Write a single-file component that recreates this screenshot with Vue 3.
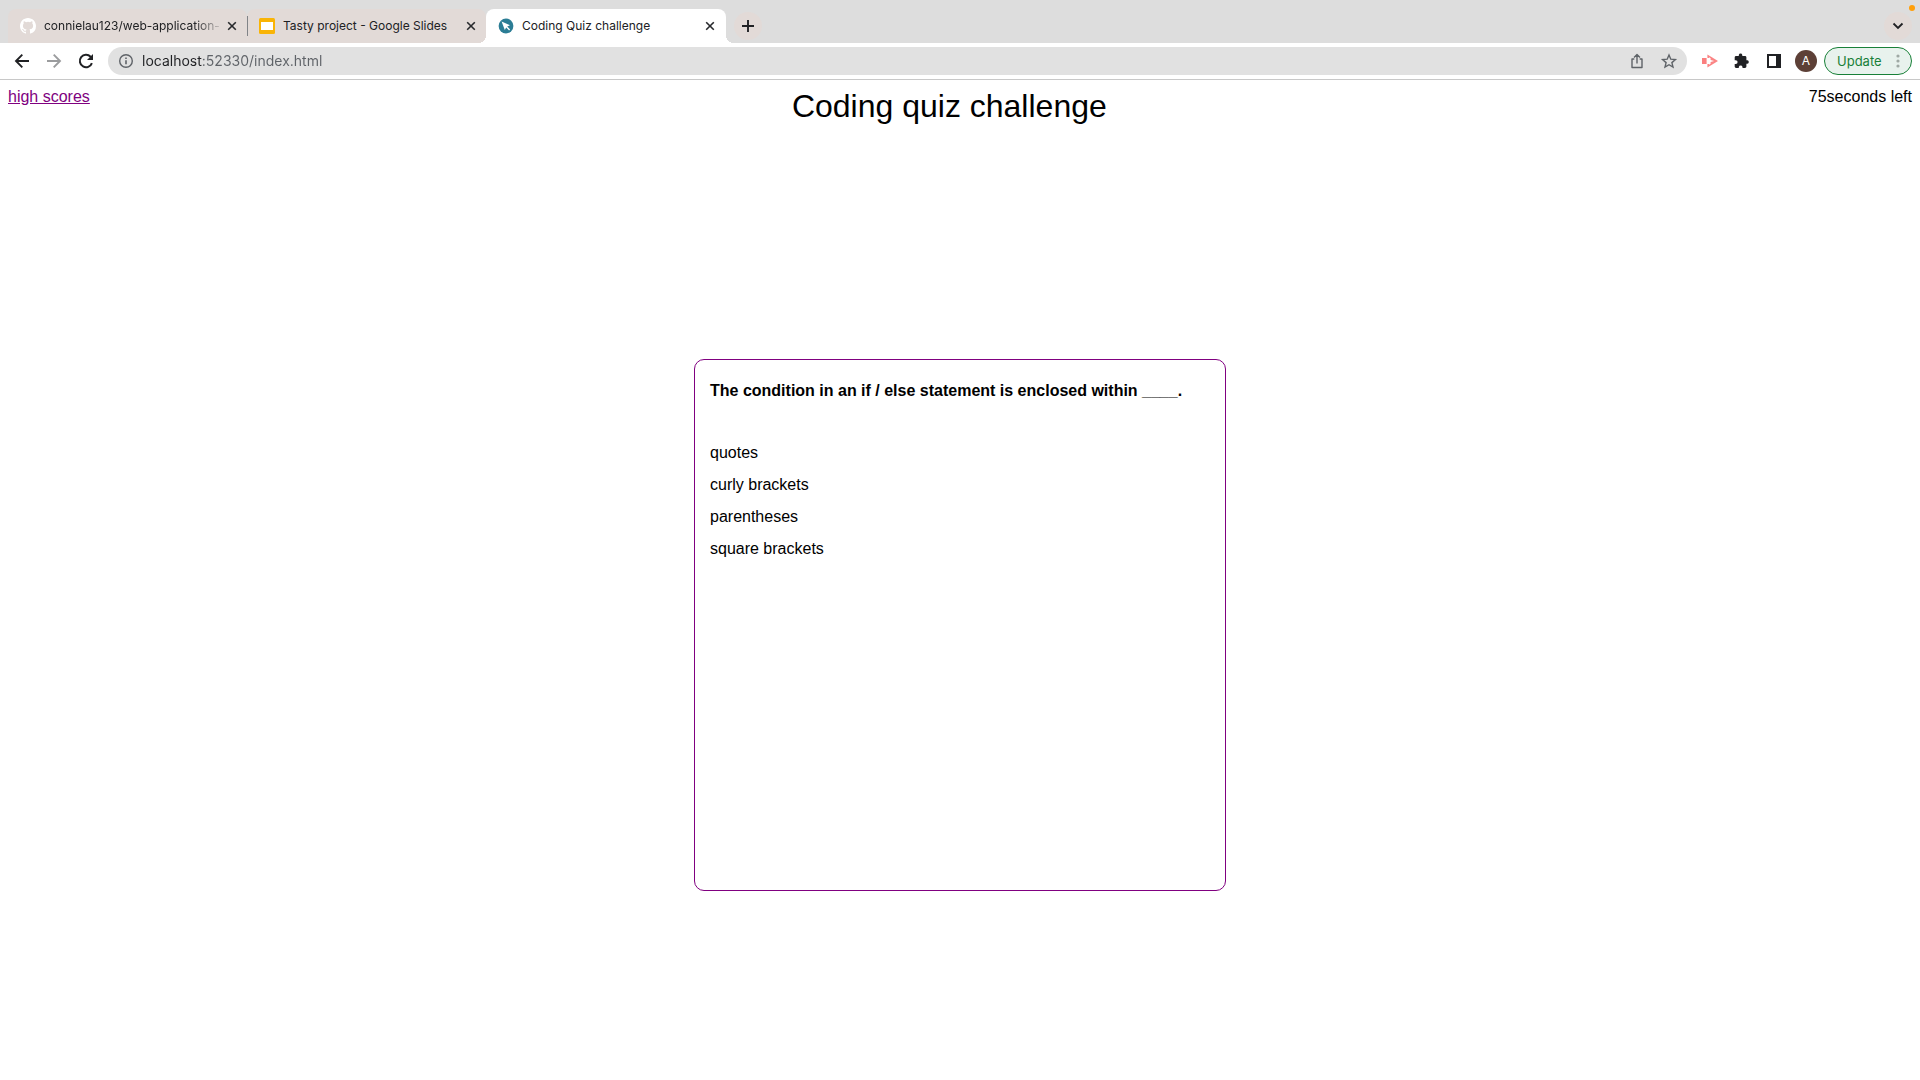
<script setup>
import { ref } from 'vue'

const tabs = [
  { id: 'github', title: 'connielau123/web-application-', fade: true },
  { id: 'slides', title: 'Tasty project - Google Slides' },
  { id: 'quiz', title: 'Coding Quiz challenge', active: true },
]
const address = ref('localhost:52330/index.html')
const secondsLeft = ref(75)
const question = 'The condition in an if / else statement is enclosed within ____.'
const choices = ['quotes', 'curly brackets', 'parentheses', 'square brackets']
</script>

<template>
  <div class="browser">
    <header class="chrome">
      <nav class="tab-strip" aria-label="Tabs">
        <div v-for="tab in tabs" :key="tab.id" class="tab" :class="[tab.id, { active: tab.active }]">
          <svg v-if="tab.id === 'github'" class="favicon" viewBox="0 0 16 16" aria-hidden="true">
            <path fill="#fff" d="M8 0C3.58 0 0 3.58 0 8c0 3.54 2.29 6.53 5.47 7.59.4.07.55-.17.55-.38 0-.19-.01-.82-.01-1.49-2.01.37-2.53-.49-2.69-.94-.09-.23-.48-.94-.82-1.13-.28-.15-.68-.52-.01-.53.63-.01 1.08.58 1.23.82.72 1.21 1.87.87 2.33.66.07-.52.28-.87.51-1.07-1.78-.2-3.64-.89-3.64-3.95 0-.87.31-1.59.82-2.15-.08-.2-.36-1.02.08-2.12 0 0 .67-.21 2.2.82a7.6 7.6 0 0 1 4 0c1.53-1.04 2.2-.82 2.2-.82.44 1.1.16 1.92.08 2.12.51.56.82 1.27.82 2.15 0 3.07-1.87 3.75-3.65 3.95.29.25.54.73.54 1.48 0 1.07-.01 1.93-.01 2.2 0 .21.15.46.55.38A8.01 8.01 0 0 0 16 8c0-4.42-3.58-8-8-8z" />
          </svg>
          <svg v-else-if="tab.id === 'slides'" class="favicon" viewBox="0 0 16 16" aria-hidden="true">
            <rect width="16" height="16" rx="1.5" fill="#f9b406" />
            <rect x="2" y="4" width="12" height="8" fill="#fff" />
          </svg>
          <svg v-else class="favicon" viewBox="0 0 16 16" aria-hidden="true">
            <circle cx="8" cy="8" r="7.4" fill="#2b7d95" />
            <path fill="#fff" d="M3.6 3.6 12 7.2 9.2 8.4l2.9 3-1 1-2.9-2.9L6.8 12z" />
          </svg>
          <a class="tab-title" :class="{ fade: tab.fade }" href="#">{{ tab.title }}</a>
          <button class="tab-close" type="button" aria-label="Close tab">
            <svg viewBox="0 0 16 16"><path d="m4.2 4.2 7.6 7.6m0-7.6-7.6 7.6" fill="none" stroke="#27292c" stroke-width="1.6" /></svg>
          </button>
        </div>
        <button class="round-button" type="button" aria-label="New tab">
          <svg viewBox="0 0 16 16"><path d="M8 2v12M2 8h12" fill="none" stroke="#202124" stroke-width="1.9" /></svg>
        </button>
        <button class="round-button tab-search" type="button" aria-label="Search tabs">
          <svg viewBox="0 0 16 16"><path d="m3.5 5.5 4.5 4.5 4.5-4.5" fill="none" stroke="#202124" stroke-width="1.8" /></svg>
        </button>
        <span class="recording-dot"></span>
      </nav>

      <div class="toolbar">
        <button class="tool" type="button" aria-label="Back">
          <svg viewBox="0 0 20 20"><path d="M17 10H4m6.3-6.3L4 10l6.3 6.3" fill="none" stroke="#202124" stroke-width="1.9" /></svg>
        </button>
        <button class="tool" type="button" aria-label="Forward">
          <svg viewBox="0 0 20 20"><path d="M3 10h13M9.7 3.7 16 10l-6.3 6.3" fill="none" stroke="#9b9c9e" stroke-width="1.9" /></svg>
        </button>
        <button class="tool" type="button" aria-label="Reload">
          <svg viewBox="0 0 20 20">
            <path d="M15.9 12.1A6.2 6.2 0 1 1 14.6 5.8L16 7.2" fill="none" stroke="#202124" stroke-width="2" />
            <path d="M17 3v6h-6z" fill="#202124" />
          </svg>
        </button>
        <form class="omnibox" @submit.prevent>
          <svg class="info" viewBox="0 0 16 16" aria-hidden="true">
            <circle cx="8" cy="8" r="6.3" fill="none" stroke="#5f6368" stroke-width="1.4" />
            <path d="M8 7.2v4M8 4.4v1.6" stroke="#5f6368" stroke-width="1.6" />
          </svg>
          <input v-model="address" class="address" type="text" aria-label="Address" spellcheck="false" />
          <button class="tool" type="button" aria-label="Share">
            <svg viewBox="0 0 20 20"><path d="M7.3 8H5v8.5h10V8h-2.3M10 12.5V3.8M7 6.6l3-3 3 3" fill="none" stroke="#5f6368" stroke-width="1.4" stroke-linejoin="round" /></svg>
          </button>
          <button class="tool" type="button" aria-label="Bookmark">
            <svg viewBox="0 0 20 20"><path d="m10 4 1.8 4.2 4.6.4-3.5 3 1.1 4.5-4-2.4-4 2.4 1.1-4.5-3.5-3 4.6-.4z" fill="none" stroke="#5f6368" stroke-width="1.4" /></svg>
          </button>
        </form>
        <div class="extensions">
          <button type="button" aria-label="Screen recorder">
            <svg viewBox="0 0 20 20">
              <path d="M2 7h4.6v6H2z" fill="#fb7f7f" />
              <path fill="#fb8585" fill-rule="evenodd" d="M7.4 3.4 18 10 7.4 16.6V13H9v.7l1.6-1V11l3.6-1-3.6-1V7.3L9 6.3V7H7.4z" />
            </svg>
          </button>
          <button type="button" aria-label="Extensions">
            <svg viewBox="0 0 20 20"><path fill="#202124" d="M15.4 9.3h-1V6.5c0-.8-.6-1.4-1.4-1.4h-2.7V4a1.8 1.8 0 0 0-3.5 0v1.1H4.1c-.8 0-1.4.6-1.4 1.4v2.7h1a1.9 1.9 0 0 1 0 3.8h-1v2.6c0 .8.6 1.4 1.4 1.4h2.7v-1a1.9 1.9 0 0 1 3.7 0v1H13c.8 0 1.4-.6 1.4-1.4v-2.8h1a1.8 1.8 0 0 0 0-3.5z" /></svg>
          </button>
          <button type="button" aria-label="Side panel">
            <svg viewBox="0 0 20 20"><path fill="#202124" fill-rule="evenodd" d="M3 3h14v14H3zM5 5v10h7V5z" /></svg>
          </button>
          <button class="avatar" type="button">A</button>
        </div>
        <button class="update" type="button">
          Update
          <svg viewBox="0 0 4 16" aria-hidden="true"><g fill="#9fa9a4"><circle cx="2" cy="3" r="1.6" /><circle cx="2" cy="8" r="1.6" /><circle cx="2" cy="13" r="1.6" /></g></svg>
        </button>
      </div>
    </header>

    <div class="page">
      <div class="page-header">
        <a class="scores" href="#">high scores</a>
        <h1>Coding quiz challenge</h1>
        <span class="timer">{{ secondsLeft }}seconds left</span>
      </div>
      <main class="quiz-card">
        <h2>{{ question }}</h2>
        <ul>
          <li v-for="choice in choices" :key="choice">
            <button type="button">{{ choice }}</button>
          </li>
        </ul>
      </main>
    </div>
  </div>
</template>

<style>
body {
  margin: 0;
  background: #fff;
}
</style>

<style scoped>
* {
  box-sizing: border-box;
}

button {
  padding: 0;
  border: 0;
  background: none;
  color: inherit;
  font: inherit;
}

svg {
  display: block;
}

.chrome {
  font-family: Inter, "Open Sans", sans-serif;
}

.tab-strip {
  position: relative;
  display: flex;
  align-items: flex-end;
  height: 43px;
  padding: 0 8px;
  background: #ddd;
}

.tab {
  position: relative;
  display: flex;
  align-items: center;
  flex: 0 0 239px;
  height: 34px;
  padding: 0 7px 0 12px;
  border-radius: 8px 8px 0 0;
  background: #e2dad7;
  color: #202124;
  font-size: 12px;
}

.tab.active {
  flex-basis: 240px;
  padding-right: 8px;
  background: #fff;
}

.tab.active::before,
.tab.active::after {
  content: "";
  position: absolute;
  bottom: 0;
  width: 8px;
  height: 8px;
}

.tab.active::before {
  right: 100%;
  background: radial-gradient(circle at 0 0, transparent 8px, #fff 8px);
}

.tab.active::after {
  left: 100%;
  background: radial-gradient(circle at 100% 0, transparent 8px, #fff 8px);
}

.tab.slides::before {
  content: "";
  position: absolute;
  left: 0;
  width: 1px;
  height: 20px;
  background: #808387;
}

.favicon {
  flex: none;
  width: 16px;
  height: 16px;
  margin-right: 8px;
}

.tab-title {
  flex: 1;
  overflow: hidden;
  color: inherit;
  line-height: 16px;
  text-decoration: none;
  white-space: nowrap;
}

.tab-title.fade {
  mask-image: linear-gradient(to right, #000 150px, transparent 180px);
}

.tab-close,
.tab-close svg {
  width: 16px;
  height: 16px;
}

.round-button {
  display: flex;
  align-items: center;
  justify-content: center;
  width: 28px;
  height: 28px;
  margin: 0 0 3px 8px;
  border-radius: 50%;
  background: #e2dad7;
}

.round-button svg {
  width: 16px;
  height: 16px;
}

.tab-search {
  margin-left: auto;
}

.recording-dot {
  position: absolute;
  top: 5px;
  right: 5px;
  width: 6px;
  height: 6px;
  border-radius: 50%;
  background: #ff9f0a;
}

.toolbar {
  display: flex;
  align-items: center;
  gap: 12px;
  height: 37px;
  padding: 0 8px 1px 12px;
  border-bottom: 1px solid #c8c8c8;
  background: #fff;
}

.tool,
.tool svg {
  flex: none;
  width: 20px;
  height: 20px;
}

.omnibox {
  display: flex;
  align-items: center;
  flex: 1;
  gap: 12px;
  height: 28px;
  padding: 0 8px 0 10px;
  border-radius: 14px;
  background: #e1e1e1;
}

.info {
  flex: none;
  width: 16px;
  height: 16px;
  margin-right: -4px;
}

.address {
  flex: 1;
  min-width: 0;
  padding: 0;
  border: 0;
  outline: 0;
  background: linear-gradient(to right, #202124 60px, #5f6368 60px) text;
  color: #5f6368;
  font: 14px/20px Inter, "Open Sans", sans-serif;
  -webkit-text-fill-color: transparent;
}

.extensions {
  display: flex;
  align-items: center;
  gap: 10px;
}

.extensions button {
  display: flex;
  align-items: center;
  justify-content: center;
  width: 22px;
  height: 22px;
}

.extensions svg {
  width: 20px;
  height: 20px;
}

.avatar {
  border-radius: 50%;
  background: #5d4037;
  color: #fff;
  font-size: 12px;
}

.update {
  display: flex;
  align-items: center;
  justify-content: space-between;
  width: 88px;
  height: 28px;
  margin-left: -5px;
  padding: 0 11px 0 12px;
  border: 1px solid #188038;
  border-radius: 14px;
  background: #e8f2ed;
  color: #188038;
  font-size: 13px;
}

.update svg {
  width: 4px;
  height: 16px;
}

.page {
  padding: 8px;
  color: #000;
  font: 16px/18px "Liberation Sans", Arial, sans-serif;
}

.page-header {
  display: flex;
  align-items: flex-start;
  justify-content: space-between;
}

.scores {
  color: purple;
}

h1 {
  margin: 0;
  font-size: 32px;
  font-weight: 400;
  line-height: 37px;
}

.quiz-card {
  max-width: 532px;
  min-height: 532px;
  margin: 234px auto 0;
  padding: 22px 15px 15px;
  border: 1px solid purple;
  border-radius: 10px;
}

h2 {
  margin: 0 0 37px;
  font-size: 16px;
  line-height: 18px;
}

ul {
  margin: 0;
  padding: 0;
  list-style: none;
}

li {
  padding: 7px 0;
}

li button {
  display: block;
  line-height: 18px;
}
</style>
